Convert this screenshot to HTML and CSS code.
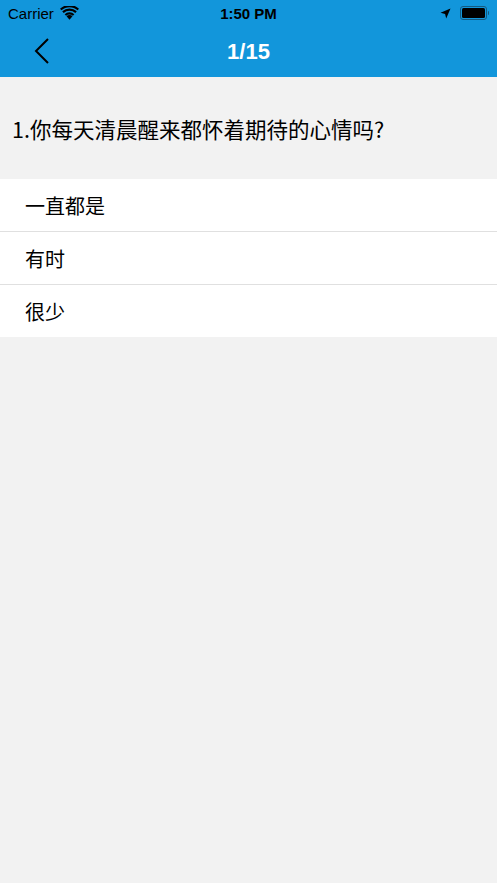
FILE: index.html
```html
<!DOCTYPE html>
<html lang="zh">
<head>
    <meta charset="UTF-8">
    <meta name="viewport" content="width=device-width, initial-scale=1.0">
    <title>1/15</title>
    <link rel="stylesheet" href="styles.css">
</head>
<body>
    <div class="header">
        <div class="status-bar">
            <div class="status-left">
                <span>Carrier</span>
                <svg class="wifi" width="19" height="14" viewBox="0 0 18 13">
                    <path d="M9 12.8l2.8-3.2a3.8 3.8 0 0 0-5.6 0z"/>
                    <path d="M4.4 7.6l1.4 1.6a4.5 4.5 0 0 1 6.4 0l1.4-1.6a6.6 6.6 0 0 0-9.2 0z"/>
                    <path d="M2.1 4.9l1.4 1.6a7.9 7.9 0 0 1 11 0l1.4-1.6a10 10 0 0 0-13.8 0z"/>
                    <path d="M0 2.4l1.4 1.6a11.2 11.2 0 0 1 15.2 0L18 2.4a13.4 13.4 0 0 0-18 0z"/>
                </svg>
            </div>
            <div class="status-time">1:50 PM</div>
            <div class="status-right">
                <svg class="arrow" width="11" height="11" viewBox="0 0 11 11">
                    <path d="M10.5 0.5L0.5 4.8l4.6 1.1 1.1 4.6z"/>
                </svg>
                <div class="battery"><div class="battery-fill"></div></div>
                <div class="battery-cap"></div>
            </div>
        </div>
        <div class="nav-bar">
            <svg class="back" width="16" height="28" viewBox="0 0 16 28">
                <path d="M14 2L2 14l12 12" fill="none" stroke="#000" stroke-width="2"/>
            </svg>
            <div class="nav-title">1/15</div>
        </div>
    </div>

    <div class="question">1.你每天清晨醒来都怀着期待的心情吗?</div>

    <div class="options">
        <div class="option">一直都是</div>
        <div class="option">有时</div>
        <div class="option">很少</div>
    </div>
</body>
</html>
```

FILE: styles.css
```css
body {
    margin: 0;
    background-color: #f2f2f2;
    font-family: "Noto Sans CJK SC", "Liberation Sans", sans-serif;
    color: #000;
}

.header {
    background-color: #1296db;
    height: 77px;
}

.status-bar {
    height: 26px;
    display: flex;
    align-items: center;
    justify-content: space-between;
    padding: 0 8px 0 8px;
    font-family: "Liberation Sans", sans-serif;
    font-size: 15px;
    position: relative;
}

.status-left {
    display: flex;
    align-items: center;
    gap: 6px;
}

.wifi path {
    fill: #000;
}

.status-time {
    position: absolute;
    left: 0;
    right: 0;
    text-align: center;
    font-weight: bold;
    pointer-events: none;
}

.status-right {
    display: flex;
    align-items: center;
}

.arrow path {
    fill: #000;
}

.battery {
    margin-left: 9px;
    width: 23px;
    height: 10px;
    border: 1px solid #145a80;
    border-radius: 3px;
    padding: 1px;
}

.battery-fill {
    width: 100%;
    height: 100%;
    background-color: #000;
    border-radius: 1.5px;
}

.battery-cap {
    width: 1.5px;
    height: 4px;
    margin-left: 1px;
    background-color: #145a80;
    border-radius: 0 1px 1px 0;
}

.nav-bar {
    height: 51px;
    position: relative;
    display: flex;
    align-items: center;
    justify-content: center;
}

.back {
    position: absolute;
    left: 34px;
    top: 11px;
}

.nav-title {
    color: #fff;
    font-family: "Liberation Sans", sans-serif;
    font-weight: bold;
    font-size: 22px;
}

.question {
    height: 102px;
    box-sizing: border-box;
    padding: 38px 0 0 12px;
    font-size: 21.5px;
    line-height: 28px;
}

.options {
    background-color: #fff;
}

.option {
    height: 53px;
    box-sizing: border-box;
    padding-left: 25px;
    display: flex;
    align-items: center;
    font-size: 20px;
    border-bottom: 1px solid #e0e0e0;
}

.option:last-child {
    height: 52px;
    border-bottom: none;
}
```
